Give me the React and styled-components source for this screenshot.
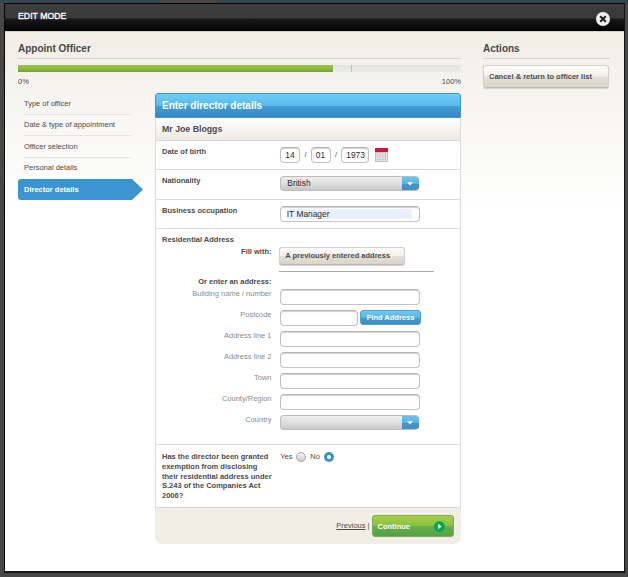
import styled, { createGlobalStyle } from "styled-components";

const steps = ["Type of officer", "Date & type of appointment", "Officer selection", "Personal details"];
const addressLines = ["Address line 1", "Address line 2", "Town", "County/Region"];

const Select = ({ value }) => (
  <SelectBox>
    <span>{value}</span>
    <div className="select__arrow">
      <svg width="6" height="4" viewBox="0 0 6 4">
        <path d="M0 0.3h6L3 3.6z" fill="#fff" />
      </svg>
    </div>
  </SelectBox>
);

const CalendarIcon = () => (
  <svg width="13" height="14" viewBox="0 0 13 14">
    <rect width="13" height="14" fill="#c5c2c0" />
    <rect width="13" height="4" fill="#cc1544" />
    <path d="M1.5 5.5h10v7h-10zM1.5 7.8h10M1.5 10.2h10M4 5.5v7M6.5 5.5v7M9 5.5v7" fill="none" stroke="#f1efee" strokeWidth="0.7" />
  </svg>
);

const App = () => {
  return (
    <Page>
      <GlobalStyle />
      <Modal>
        <ModalHeader>
          <h1>EDIT MODE</h1>
          <CloseButton aria-label="Close">
            <svg width="14" height="14" viewBox="0 0 14 14">
              <circle cx="7" cy="7" r="7" fill="#eeeeec" />
              <path d="M4.2 4.2l5.6 5.6M9.8 4.2l-5.6 5.6" stroke="#222" strokeWidth="2" />
            </svg>
          </CloseButton>
        </ModalHeader>
        <ModalBody>
          <Main>
            <SectionTitle>Appoint Officer</SectionTitle>
            <Progress>
              <div className="progress__done" />
              <div className="progress__next" />
            </Progress>
            <ProgressLabels>
              <span>0%</span>
              <span>100%</span>
            </ProgressLabels>
            <Columns>
              <Steps>
                {steps.map(step => (
                  <Step key={step}>{step}</Step>
                ))}
                <ActiveStep>Director details</ActiveStep>
              </Steps>
              <Card>
                <CardHeader>Enter director details</CardHeader>
                <CardName>Mr Joe Bloggs</CardName>
                <Row $height={29} $top={6}>
                  <Label>Date of birth</Label>
                  <DateFields>
                    <Input $width={20} defaultValue="14" />
                    <i>/</i>
                    <Input $width={20} defaultValue="01" />
                    <i>/</i>
                    <Input $width={27.5} defaultValue="1973" />
                    <CalendarIcon />
                  </DateFields>
                </Row>
                <Row $height={30} $top={6}>
                  <Label>Nationality</Label>
                  <Select value="British" />
                </Row>
                <Row $height={29} $top={6}>
                  <Label>Business occupation</Label>
                  <Input $filled defaultValue="IT Manager" />
                </Row>
                <AddressSection>
                  <h3>Residential Address</h3>
                  <FillRow>
                    <FieldLabel $bold>Fill with:</FieldLabel>
                    <BeigeButton $width={126} $height={18}>
                      A previously entered address
                    </BeigeButton>
                  </FillRow>
                  <Divider />
                  <EnterRow>
                    <FieldLabel $bold>Or enter an address:</FieldLabel>
                  </EnterRow>
                  <FieldRow>
                    <FieldLabel>Building name / number</FieldLabel>
                    <Input />
                  </FieldRow>
                  <FieldRow>
                    <FieldLabel>Postcode</FieldLabel>
                    <Input $width={78} />
                    <FindButton>Find Address</FindButton>
                  </FieldRow>
                  {addressLines.map(line => (
                    <FieldRow key={line}>
                      <FieldLabel>{line}</FieldLabel>
                      <Input />
                    </FieldRow>
                  ))}
                  <FieldRow>
                    <FieldLabel>Country</FieldLabel>
                    <Select value="" />
                  </FieldRow>
                </AddressSection>
                <Row $height={63} $top={7}>
                  <Label>
                    Has the director been granted
                    <br />
                    exemption from disclosing
                    <br />
                    their residential address under
                    <br />
                    S.243 of the Companies Act
                    <br />
                    2006?
                  </Label>
                  <RadioGroup>
                    <span>Yes</span>
                    <Radio />
                    <span>No</span>
                    <Radio $checked />
                  </RadioGroup>
                </Row>
                <CardFooter>
                  <a>Previous</a>
                  <span>|</span>
                  <ContinueButton>
                    Continue
                    <svg width="11" height="11" viewBox="0 0 11 11">
                      <circle cx="5.5" cy="5.5" r="5.4" fill="#05a650" />
                      <path d="M4.2 2.7l3.2 2.8-3.2 2.8z" fill="#fff" />
                    </svg>
                  </ContinueButton>
                </CardFooter>
              </Card>
            </Columns>
          </Main>
          <Aside>
            <SectionTitle>Actions</SectionTitle>
            <BeigeButton $width={126} $height={22.5}>
              Cancel &amp; return to officer list
            </BeigeButton>
          </Aside>
        </ModalBody>
      </Modal>
    </Page>
  );
};

export default App;

/* ---------------------------- STYLED COMPONENTS --------------------------- */

const GlobalStyle = createGlobalStyle`
  * {
    box-sizing: border-box;
  }

  body {
    margin: 0;
    font-family: "Liberation Sans", Arial, sans-serif;
    font-size: 7.5px;
    line-height: 10px;
    color: #4c4c4c;
  }

  button, input {
    font-family: inherit;
    margin: 0;
  }

  svg {
    display: block;
    flex: none;
  }
`;

const Page = styled.div`
  width: 628px;
  height: 577px;
  padding: 3px 3px 4px 4px;
  overflow: hidden;
  background: linear-gradient(90deg, #36444d 160px, #4b4544 160px, #4b4544 217px, #36444d 217px) top / 100% 3px no-repeat,
    #474747;
`;

const Modal = styled.div`
  height: 570px;
  border: 1px solid #050505;
  border-bottom: 2px solid #161616;
  border-right-color: #111;
  display: flex;
  flex-direction: column;
`;

const ModalHeader = styled.header`
  height: 27px;
  flex: none;
  display: flex;
  justify-content: space-between;
  padding: 0 14.5px 0 13px;
  background: linear-gradient(#3e3e3e, #393939 14px, #191919 15px, #000);

  h1 {
    margin: 7px 0 0;
    font-size: 8.75px;
    line-height: 11px;
    font-weight: normal;
    color: #fff;
    -webkit-text-stroke: 0.3px #fff;
  }
`;

const CloseButton = styled.button`
  width: 14px;
  height: 14px;
  margin-top: 8px;
  padding: 0;
  border: 0;
  background: none;
`;

const ModalBody = styled.div`
  flex: 1;
  display: flex;
  gap: 22px;
  padding: 0 13px;
  background: linear-gradient(#f1eee6, #f8f7f3 90px, #fff 180px);
  border-top: 1px solid #d5d3cc;
`;

const Main = styled.main`
  width: 443px;
`;

const Aside = styled.aside`
  width: 127px;
`;

const SectionTitle = styled.h2`
  height: 27px;
  margin: 0 0 6px;
  padding-top: 11px;
  border-bottom: 1px solid #d5d2cb;
  font-size: 10px;
  line-height: 12px;
  color: #484848;
`;

const Progress = styled.div`
  height: 7px;
  display: flex;
  background: linear-gradient(#e4e3e0, #ededeb);

  .progress__done {
    width: 315px;
    background: linear-gradient(#9ac24b, #8db83e 50%, #789f2f);
  }

  .progress__next {
    width: 19px;
    border-right: 1px solid #c2c1be;
  }
`;

const ProgressLabels = styled.div`
  display: flex;
  justify-content: space-between;
  margin-top: 5px;
`;

const Columns = styled.div`
  display: flex;
  justify-content: space-between;
  margin-top: 6px;
`;

const Steps = styled.nav`
  width: 125px;
`;

const Step = styled.div`
  width: 107px;
  height: 21.5px;
  margin-left: 6px;
  padding-top: 5.5px;
  border-bottom: 1px solid #e6e4e0;

  &:nth-child(4) {
    border-bottom: 0;
  }
`;

const ActiveStep = styled.div`
  height: 21px;
  padding: 5.5px 6px;
  border-radius: 3px;
  color: #fff;
  font-weight: bold;
  background: #3c95d1;
  clip-path: polygon(0 0, 114px 0, 125px 10.5px, 114px 21px, 0 21px);
`;

const Card = styled.section`
  width: 306px;
  border-radius: 4px 4px 8px 8px;
`;

const CardHeader = styled.div`
  height: 25px;
  padding: 6px 6px 0;
  border: 1px solid #3f95d0;
  border-radius: 3px 3px 0 0;
  background: linear-gradient(#70cdf6, #58bbea 50%, #459fd7 51%, #3387c6);
  color: #fff;
  font-size: 10px;
  line-height: 12px;
  font-weight: bold;
`;

const CardName = styled.div`
  height: 23px;
  padding: 5.5px 6px 0;
  border: 1px solid #dadadc;
  border-top: 0;
  background: linear-gradient(#fff, #efebe3);
  font-size: 8.75px;
  line-height: 11px;
  font-weight: bold;
`;

const Row = styled.div`
  height: ${props => props.$height}px;
  display: flex;
  align-items: flex-start;
  padding: ${props => props.$top}px 0 0 6px;
  border: 1px solid #dadadc;
  border-top: 0;
  background: #fff;
`;

const Label = styled.div`
  width: 118.3px;
  flex: none;
  font-weight: bold;
  line-height: 9.8px;
`;

const Input = styled.input`
  width: ${props => props.$width || 139.5}px;
  height: 16px;
  padding: 0 0 0 ${props => (props.$width ? 4 : 5.5)}px;
  border: 1px solid #c3c3c3;
  border-top-color: #b4b4b4;
  border-radius: 4px;
  outline: none;
  box-shadow: inset 0 1px 1px #d2d2d2;
  background: ${props =>
    props.$filled ? "linear-gradient(#e8f0fe, #e8f0fe) 5.5px 2px / 125px 10px no-repeat, #fff" : "#fff"};
  font-size: 8.4px;
  color: #2c2c2c;
`;

const DateFields = styled.div`
  display: flex;
  align-items: center;

  i {
    width: 10.5px;
    text-align: center;
    font-style: normal;
  }

  svg {
    margin-left: 6px;
  }
`;

const SelectBox = styled.div`
  width: 138.5px;
  height: 15px;
  display: flex;
  justify-content: space-between;
  border-radius: 4px;
  overflow: hidden;
  border: 1px solid #bdbdbd;
  border-right: 0;
  background: linear-gradient(#eee, #dedede 50%, #c9c9c9);
  font-size: 8.4px;
  line-height: 12.5px;
  color: #2c2c2c;

  span {
    padding-left: 6px;
  }

  .select__arrow {
    width: 17px;
    height: 15px;
    margin-top: -1px;
    display: flex;
    align-items: center;
    justify-content: center;
    background: linear-gradient(#69c5ef, #5ab4e2 50%, #4496c9 51%, #3f8fc3);
  }
`;

const AddressSection = styled.div`
  height: 216px;
  padding: 6px 6px 0;
  border: 1px solid #dadadc;
  border-top: 0;
  background: #fff;

  h3 {
    margin: 0;
    font-size: inherit;
    line-height: 10px;
  }
`;

const FieldLabel = styled.div`
  width: 109.5px;
  margin-right: 8.8px;
  flex: none;
  text-align: right;
  white-space: nowrap;
  line-height: 9px;
  font-weight: ${props => (props.$bold ? "bold" : "normal")};
  color: ${props => (props.$bold ? "#4c4c4c" : "#8c8c8c")};
`;

const FillRow = styled.div`
  display: flex;
  height: 24.5px;
  margin-top: 1.5px;

  button {
    margin: 0 0 0 -1px;
  }
`;

const Divider = styled.div`
  width: 155px;
  height: 1px;
  margin-left: 117px;
  background: #aaa;
`;

const EnterRow = styled.div`
  display: flex;
  margin-top: 4.5px;
  height: 12px;
`;

const FieldRow = styled.div`
  height: 21.15px;
  display: flex;
  align-items: flex-start;
`;

const BeigeButton = styled.button`
  width: ${props => props.$width}px;
  height: ${props => props.$height}px;
  padding: 0 0 0 5px;
  border: 1px solid #d4d0c7;
  border-bottom-color: #bfb9ac;
  border-radius: 3px;
  background: linear-gradient(#fdfdfb, #f2f0eb 49%, #e4e0d7 51%, #d9d4c7);
  box-shadow: 0 1px 1px #d5d1c9;
  text-align: left;
  font-size: 7.5px;
  font-weight: bold;
  color: #4c4c4c;
`;

const FindButton = styled.button`
  width: 60.5px;
  height: 15px;
  margin: 0.5px 0 0 2px;
  padding: 0;
  border: 1px solid #4ba3d7;
  border-radius: 3px;
  background: linear-gradient(#6fc8f1, #59b6e4 50%, #469bcf 51%, #3c8ec3);
  font-size: 7.5px;
  font-weight: bold;
  color: #fff;
`;

const RadioGroup = styled.div`
  display: flex;
  align-items: center;
  gap: 3.9px;
`;

const Radio = styled.div`
  width: 10px;
  height: 10px;
  border-radius: 50%;
  border: ${props => (props.$checked ? "3px solid #3b91cf" : "1px solid #a6a6a6")};
  background: ${props => (props.$checked ? "#fff" : "linear-gradient(#f5f5f5, #ccc)")};
`;

const CardFooter = styled.footer`
  height: 36px;
  display: flex;
  align-items: center;
  justify-content: flex-end;
  gap: 2px;
  padding-right: 7px;
  border-radius: 0 0 7px 7px;
  background: #f1eee6;

  a {
    text-decoration: underline;
  }
`;

const ContinueButton = styled.button`
  width: 82.5px;
  height: 22.5px;
  display: flex;
  align-items: center;
  justify-content: space-between;
  padding: 0 8px 0 5px;
  border: 1px solid #80a95d;
  border-radius: 3px;
  background: linear-gradient(#a5cf43, #8bc145 49%, #6aae4a 51%, #51a247);
  font-size: 7.5px;
  font-weight: bold;
  color: #fff;
`;
